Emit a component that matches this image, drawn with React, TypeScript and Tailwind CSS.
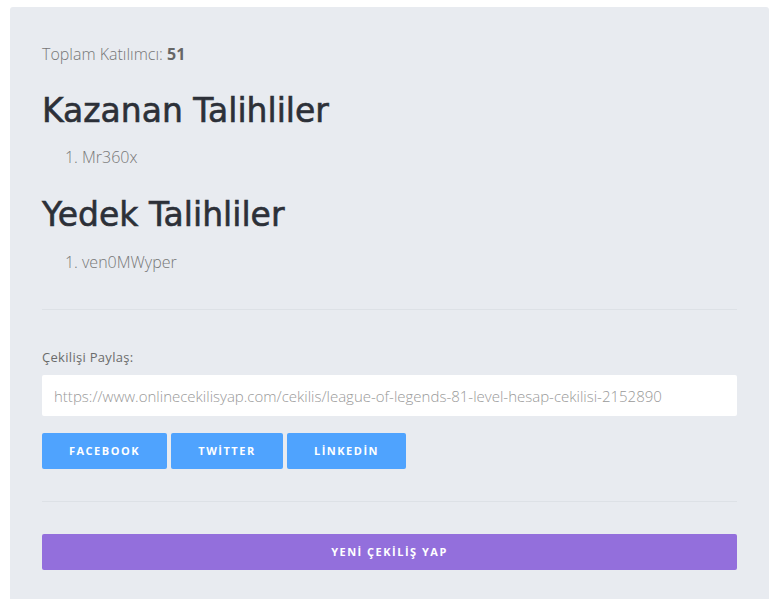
import { useState } from "react";

const shareUrl =
  "https://www.onlinecekilisyap.com/cekilis/league-of-legends-81-level-hesap-cekilisi-2152890";

const winners = ["Mr360x"];
const reserves = ["ven0MWyper"];

const shareButtons = [
  { label: "FACEBOOK", width: "w-[125px]" },
  { label: "TWİTTER", width: "w-[112px]" },
  { label: "LİNKEDİN", width: "w-[119px]" },
];

// başlıklar biraz kalın görünsün diye ince kontur
const headingCls =
  "text-[33px] leading-[38px] font-normal text-[#2c3038] [-webkit-text-stroke:0.6px_#2c3038] font-['DejaVu_Sans',sans-serif]";

export default function App() {
  const [url] = useState(shareUrl);

  return (
    <div className="min-h-[599px] bg-white pt-[7px] pl-[10px] pr-[2px] font-['Open_Sans',sans-serif]">
      <div className="min-h-[592px] rounded-t-[3px] bg-[#e8ebf0] px-8 pt-[35px] pb-8">
        <p className="text-base leading-6 font-light text-[#777]">
          Toplam Katılımcı: <b className="font-bold text-[#666]">51</b>
        </p>

        {/* Kazananlar */}
        <h2 className={`mt-[26px] ${headingCls}`}>Kazanan Talihliler</h2>
        <ol className="mt-[15px] list-decimal pl-10 text-base leading-6 font-light text-[#777]">
          {winners.map((name) => (
            <li key={name}>{name}</li>
          ))}
        </ol>

        {/* Yedekler */}
        <h2 className={`mt-[27px] ${headingCls}`}>Yedek Talihliler</h2>
        <ol className="mt-4 list-decimal pl-10 text-base leading-6 font-light text-[#777]">
          {reserves.map((name) => (
            <li key={name}>{name}</li>
          ))}
        </ol>

        <hr className="mt-[35px] border-0 border-t border-[#dde1e6]" />

        <label className="mt-[37px] block text-[13px] leading-5 tracking-[0.3px] text-[#6b6b6b]">
          Çekilişi Paylaş:
        </label>
        <input
          readOnly
          value={url}
          className="mt-2 block h-[41px] w-full rounded-[2px] bg-white px-3 text-[15px] font-light text-[#999] outline-none"
        />

        <div className="mt-[17px] flex gap-1">
          {shareButtons.map((b) => (
            <button
              key={b.label}
              className={`${b.width} h-9 rounded-[2px] bg-[#4fa3fe] text-[11px] font-bold tracking-[1.5px] text-white`}
            >
              {b.label}
            </button>
          ))}
        </div>

        <hr className="mt-8 border-0 border-t border-[#dde1e6]" />

        <button className="mt-8 block h-9 w-full rounded-[2px] bg-[#936fdc] text-[11px] font-bold tracking-[1.5px] text-white">
          YENİ ÇEKİLİŞ YAP
        </button>
      </div>
    </div>
  );
}
